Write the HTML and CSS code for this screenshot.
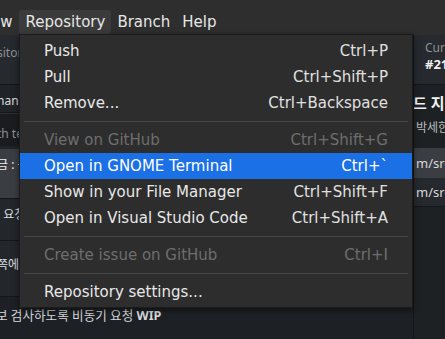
FILE: index.html
```html
<!DOCTYPE html>
<html lang="en">
<head>
    <meta charset="UTF-8">
    <meta name="viewport" content="width=device-width, initial-scale=1.0">
    <link rel="stylesheet" href="styles.css">
</head>
<body>
    <div class="topbar">
        <div class="menubar">
            <span class="menu-btn">View</span>
            <span class="menu-btn open">Repository</span>
            <span class="menu-btn">Branch</span>
            <span class="menu-btn">Help</span>
        </div>
    </div>

    <div class="main">
        <div class="list">
            <div class="row row-toolbar"><span class="muted">sitory</span></div>
            <div class="row row-tab"><span>hanges</span></div>
            <div class="row row-filter"><span class="muted">th text</span></div>
            <div class="row row-commit selected"><span>금 : 응답</span></div>
            <div class="row row-commit short"><span>. 요청</span></div>
            <div class="row row-commit tall"><span>쪽에 표시</span></div>
            <div class="row row-last"><span class="last-text">보 검사하도록 비동기 요청 <b>WIP</b></span></div>
        </div>

        <div class="pane">
            <div class="pane-toolbar">
                <span class="muted small">Current branch</span>
                <b class="branch">#21 fix</b>
            </div>
            <div class="pane-head">
                <div class="commit-title">드 지정</div>
                <div class="commit-author"><span class="avatar"></span>박세한</div>
            </div>
            <div class="file selected">m/src/main</div>
            <div class="file alt">m/src/view</div>
        </div>
    </div>

    <div class="dropdown">
        <div class="item"><span>Push</span><span class="key">Ctrl+P</span></div>
        <div class="item"><span>Pull</span><span class="key">Ctrl+Shift+P</span></div>
        <div class="item"><span>Remove...</span><span class="key">Ctrl+Backspace</span></div>
        <div class="sep"></div>
        <div class="item disabled"><span>View on GitHub</span><span class="key">Ctrl+Shift+G</span></div>
        <div class="item active"><span>Open in GNOME Terminal</span><span class="key">Ctrl+`</span></div>
        <div class="item"><span>Show in your File Manager</span><span class="key">Ctrl+Shift+F</span></div>
        <div class="item"><span>Open in Visual Studio Code</span><span class="key">Ctrl+Shift+A</span></div>
        <div class="sep"></div>
        <div class="item disabled"><span>Create issue on GitHub</span><span class="key">Ctrl+I</span></div>
        <div class="sep"></div>
        <div class="item"><span>Repository settings...</span></div>
    </div>
</body>
</html>
```

FILE: styles.css
```css
body {
    margin: 0;
    width: 445px;
    height: 339px;
    overflow: hidden;
    background-color: #1e2124;
    font-family: "DejaVu Sans", "Noto Sans CJK KR", sans-serif;
    color: #d4d6d8;
    position: relative;
}

.topbar {
    height: 35px;
    background-color: #2e2e2e;
    display: flex;
    align-items: flex-end;
    overflow: hidden;
}

.menubar {
    display: flex;
    margin-left: -29px;
    padding-bottom: 1px;
}

.menu-btn {
    height: 24px;
    line-height: 25px;
    padding: 0 6px;
    font-size: 15px;
    color: #e6e6e6;
    border-radius: 3px;
}

.menu-btn.open {
    background-color: #3b3b3b;
    padding: 0 6px 0 7px;
}

.main {
    display: flex;
    height: 304px;
}

.list {
    width: 413px;
    display: flex;
    flex-direction: column;
    font-family: "Noto Sans", "Noto Sans CJK KR", sans-serif;
    font-size: 12px;
}

.row {
    display: flex;
    align-items: flex-start;
    white-space: nowrap;
    overflow: hidden;
    border-bottom: 1px solid #141619;
    background-color: #23262a;
}

.row span {
    margin-left: -3px;
}

.muted {
    color: #8d9196;
}

.row-toolbar {
    background-color: #26292d;
    padding-top: 9px;
    box-sizing: border-box;
    height: 50px;
}

.row-tab {
    height: 28px;
    box-sizing: border-box;
    padding-top: 7px;
    background-color: #202327;
    color: #d8dadc;
}

.row-filter {
    height: 36px;
    box-sizing: border-box;
    padding-top: 11px;
    background-color: #1a1c1f;
    border-top: 1px solid #2c2f33;
    border-bottom: 3px solid #202327;
}

.row-commit {
    box-sizing: border-box;
    padding-top: 6px;
    height: 50px;
    color: #dcdee0;
}

.row-commit.selected {
    background-color: #3a3e43;
    color: #eeeeee;
}

.row-commit.short {
    height: 42px;
}

.row-commit.tall {
    height: 56px;
    padding-top: 14px;
}

.row-last {
    flex: 1;
    padding-top: 8px;
    background-color: #1d2024;
    border-bottom: none;
}

.row span.last-text {
    margin-left: -4px;
    font-size: 12.6px;
    color: #d6d8da;
}

.pane {
    flex: 1;
    display: flex;
    flex-direction: column;
    white-space: nowrap;
    overflow: hidden;
    border-left: 1px solid #141619;
    font-family: "Noto Sans", "Noto Sans CJK KR", sans-serif;
}

.pane-toolbar {
    height: 50px;
    box-sizing: border-box;
    padding: 5px 0 0 11px;
    background-color: #26292d;
    border-bottom: 1px solid #141619;
    display: flex;
    flex-direction: column;
    line-height: 16px;
}

.small {
    font-size: 12px;
}

.branch {
    font-size: 13px;
    color: #f0f0f0;
}

.pane-head {
    height: 63px;
    box-sizing: border-box;
    padding-top: 7px;
}

.commit-title {
    font-size: 15px;
    font-weight: bold;
    color: #f2f2f2;
    margin-left: -1px;
    line-height: 22px;
}

.commit-author {
    display: flex;
    align-items: center;
    gap: 4px;
    font-size: 12px;
    color: #b8bbbe;
    margin-top: 4px;
    margin-left: -4px;
}

.avatar {
    width: 10px;
    height: 10px;
    border-radius: 50%;
    border: 1px solid #9ea1a4;
}

.file {
    height: 28px;
    line-height: 28px;
    padding-left: 2px;
    font-size: 13px;
    color: #d6d8da;
}

.file.selected {
    background-color: #3a3e43;
    height: 30px;
    line-height: 30px;
}

.file.alt {
    background-color: #25282c;
    border-bottom: 1px solid #141619;
}

.dropdown {
    position: absolute;
    top: 34px;
    left: 19px;
    width: 392px;
    padding: 3px 0 2px;
    background-color: #2d2d2d;
    border: 1px solid #1b1b1b;
    box-shadow: 0 2px 6px rgba(0, 0, 0, 0.5);
    font-size: 15px;
    color: #e8e8e8;
}

.item {
    height: 26px;
    display: flex;
    align-items: center;
    justify-content: space-between;
    padding: 0 24px;
}

.item .key {
    color: #e0e0e0;
}

.item.disabled,
.item.disabled .key {
    color: #6d6d6d;
}

.item.active {
    background-color: #1a70e4;
    color: #ffffff;
}

.item.active .key {
    color: #ffffff;
}

.sep {
    height: 1px;
    margin: 5px 4px;
    background-color: #474747;
}
```
